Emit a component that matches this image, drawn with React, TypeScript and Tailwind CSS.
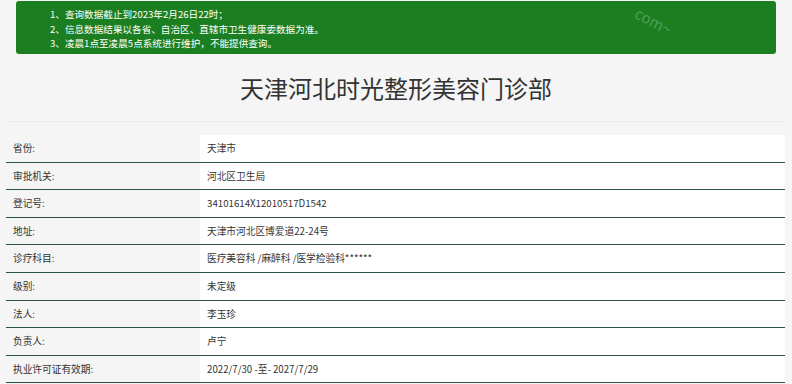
import React from "react";

const rows: [string, string][] = [
  ["省份:", "天津市"],
  ["审批机关:", "河北区卫生局"],
  ["登记号:", "34101614X12010517D1542"],
  ["地址:", "天津市河北区博爱道22-24号"],
  ["诊疗科目:", "医疗美容科 /麻醉科 /医学检验科******"],
  ["级别:", "未定级"],
  ["法人:", "李玉珍"],
  ["负责人:", "卢宁"],
  ["执业许可证有效期:", "2022/7/30 -至- 2027/7/29"],
];

export default function App() {
  return (
    <div
      className="w-[792px] h-[384px] overflow-hidden bg-[#f5f5f5] text-[#333]"
      style={{ fontFamily: '"Noto Sans CJK SC", "Liberation Sans", sans-serif' }}
    >
      <div className="mx-[16px] mt-[1px] w-[760px] h-[53px] rounded-[3px] bg-[#1b7f22] relative overflow-hidden pl-[34px] pt-[6px] text-white text-[9.6px] leading-[14.5px]">
        <div>1、查询数据截止到2023年2月26日22时；</div>
        <div>2、信息数据结果以各省、自治区、直辖市卫生健康委数据为准。</div>
        <div>3、凌晨1点至凌晨5点系统进行维护，不能提供查询。</div>
        <div className="absolute left-[618px] top-[12px] rotate-[28deg] text-[15px] leading-[16px] text-white/25">com~</div>
      </div>
      <div className="h-[68px] flex items-center justify-center text-[24px] text-[#333] pt-[1px] border-b border-[#ebebeb] mx-[6px]">
        天津河北时光整形美容门诊部
      </div>
      <div className="mt-[13px] mx-[6px] w-[779px]">
        {rows.map(([k, v]) => (
          <div key={k} className="flex h-[27.6px] border-b border-[#2c5445] text-[9.7px]">
            <div className="w-[194px] pl-[7px] flex items-center">{k}</div>
            <div className="flex-1 bg-white pl-[7px] flex items-center">{v}</div>
          </div>
        ))}
      </div>
    </div>
  );
}
